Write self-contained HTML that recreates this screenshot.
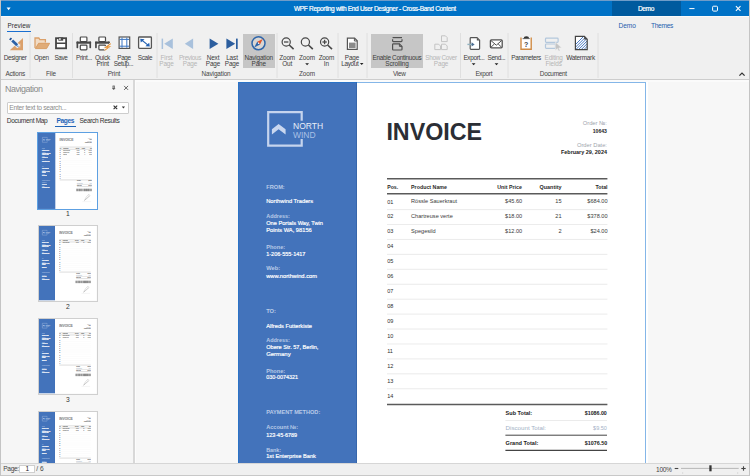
<!DOCTYPE html>
<html><head><meta charset="utf-8"><style>
html,body{margin:0;padding:0;width:750px;height:476px;overflow:hidden;background:#f0f0f0;font-family:"Liberation Sans",sans-serif;position:relative}
.tx{position:absolute;white-space:nowrap}
.abs{position:absolute}
.sv{-webkit-text-stroke:0.18px #fff}
.tt{-webkit-text-stroke:0.2px #fff}
.th .tx{-webkit-text-stroke:0.6px currentColor;opacity:.6}
.th .sv{-webkit-text-stroke:1.6px #fff;opacity:.9}
.pg{position:absolute;width:409.5px;height:522px;background:#fff;overflow:hidden}
</style></head><body>
<!-- title bar -->
<div class=abs style="left:0;top:0;width:750px;height:1px;background:#6f9cc8"></div>
<div class=abs style="left:0;top:1px;width:750px;height:15px;background:#0072c6"></div>
<div class=abs style="left:612px;top:1px;width:68.5px;height:15px;background:#005a9e"></div>
<div class=abs style="left:0;top:16px;width:750px;height:1px;background:#fafafa"></div>
<div class=abs style="left:7.4px;top:30.8px;width:23.4px;height:1.5px;background:#1a6fd0"></div>
<!-- ribbon highlights -->
<div class=abs style="left:242.7px;top:33.8px;width:32.1px;height:34px;background:#c6c6c6"></div>
<div class=abs style="left:371px;top:34px;width:52px;height:33.8px;background:#c6c6c6"></div>
<div class=abs style="left:0;top:79px;width:750px;height:1.4px;background:#cdcdcd"></div>
<!-- nav panel -->
<div class=abs style="left:1px;top:80px;width:133px;height:383px;background:#f6f6f6"></div>
<div class=abs style="left:133.4px;top:80px;width:1.8px;height:383px;background:#d8d8d8"></div>
<div class=abs style="left:6.5px;top:101.5px;width:120.2px;height:10.5px;background:#fff;border:1px solid #cdcdcd;border-radius:1px"></div>
<div class=abs style="left:55px;top:126px;width:20.8px;height:1.3px;background:#1f64b8"></div>
<!-- doc area -->
<div class=abs style="left:135.2px;top:80px;width:613.8px;height:383px;background:#f7f7f7;overflow:hidden;border-left:0.8px solid #fcfcfc">
  <div class=abs style="left:0;top:0.4px;width:614px;height:1.6px;background:#fbfbfb"></div>
  <div class=pg style="left:102px;top:2px"><div class=abs style="left:0;top:0;width:119px;height:522px;background:#4373bb;box-shadow:inset -0.8px 0 0 #3563a8"></div>
<svg class=abs width="409" height="522" viewBox="0 0 409 522" style="left:0;top:0">
<g fill="none" stroke="#c5d4ee" stroke-width="2.2">
<path d="M63.7,38.8 V30.2 H30.2 V63.7 H63.7 V56.9"/>
</g>
<path d="M33.9,52.5 L40.6,47.2 L47.6,52.5 V47.3 L40.6,41.9 L33.9,47.3 Z" fill="#c9d7ef"/>
<g stroke="#5a5a5a" stroke-width="1.5">
<line x1="149" y1="96.7" x2="369.4" y2="96.7"/>
<line x1="149" y1="111.8" x2="369.4" y2="111.8"/>
<line x1="149" y1="322.6" x2="369.4" y2="322.6"/>
</g>
<g stroke="#e6e6e6" stroke-width="0.8"><line x1="149" y1="127.60" x2="369.4" y2="127.60"/><line x1="149" y1="142.53" x2="369.4" y2="142.53"/><line x1="149" y1="157.46" x2="369.4" y2="157.46"/><line x1="149" y1="172.39" x2="369.4" y2="172.39"/><line x1="149" y1="187.32" x2="369.4" y2="187.32"/><line x1="149" y1="202.25" x2="369.4" y2="202.25"/><line x1="149" y1="217.18" x2="369.4" y2="217.18"/><line x1="149" y1="232.11" x2="369.4" y2="232.11"/><line x1="149" y1="247.04" x2="369.4" y2="247.04"/><line x1="149" y1="261.97" x2="369.4" y2="261.97"/><line x1="149" y1="276.90" x2="369.4" y2="276.90"/><line x1="149" y1="291.83" x2="369.4" y2="291.83"/><line x1="149" y1="306.76" x2="369.4" y2="306.76"/>
<line x1="267.4" y1="338.5" x2="369" y2="338.5"/></g>
<line x1="267.4" y1="353.2" x2="369" y2="353.2" stroke="#444" stroke-width="1"/>
<line x1="267.4" y1="368.4" x2="369" y2="368.4" stroke="#444" stroke-width="1.2"/>
<g fill="#333">
<rect x="262.0" y="383" width="1.5" height="17"/><rect x="265.5" y="383" width="1.5" height="17"/><rect x="268.5" y="383" width="3" height="17"/><rect x="273.5" y="383" width="1" height="17"/><rect x="276.5" y="383" width="1" height="17"/><rect x="279.0" y="383" width="2" height="17"/><rect x="283.0" y="383" width="1.5" height="17"/><rect x="285.5" y="383" width="3" height="17"/><rect x="290.5" y="383" width="3" height="17"/><rect x="295.0" y="383" width="1.5" height="17"/><rect x="297.5" y="383" width="1.5" height="17"/><rect x="301.0" y="383" width="3" height="17"/><rect x="306.0" y="383" width="1" height="17"/><rect x="309.0" y="383" width="1" height="17"/><rect x="311.0" y="383" width="1" height="17"/><rect x="313.5" y="383" width="1" height="17"/><rect x="316.0" y="383" width="3" height="17"/><rect x="321.0" y="383" width="3" height="17"/><rect x="326.0" y="383" width="3" height="17"/><rect x="330.5" y="383" width="3" height="17"/><rect x="334.5" y="383" width="2" height="17"/><rect x="337.5" y="383" width="1" height="17"/><rect x="339.5" y="383" width="3" height="17"/><rect x="343.5" y="383" width="2" height="17"/><rect x="347.5" y="383" width="3" height="17"/><rect x="352.5" y="383" width="2" height="17"/><rect x="356.0" y="383" width="3" height="17"/><rect x="361.0" y="383" width="2" height="17"/><rect x="365.0" y="383" width="3" height="17"/></g>
<path d="M318,468 C322,455 330,440 345,425 C352,418 356,425 348,436 C340,447 325,455 322,462 C330,452 345,445 360,430" fill="none" stroke="#555" stroke-width="1.2"/>
<line x1="305" y1="472" x2="365" y2="472" stroke="#aaa" stroke-width="0.8"/>
</svg>
<div class="tx" style="left:54.80px;top:40.39px;font-size:8.538px;line-height:8.538px;color:#e8eef8;">NORTH</div>
<div class="tx" style="left:54.80px;top:48.60px;font-size:8.514px;line-height:8.514px;color:#a9c0e6;">WIND</div>
<div class="tx" style="left:28.00px;top:102.53px;font-size:5.676px;line-height:5.676px;color:#b9cbe8;font-weight:700;">FROM:</div>
<div class="tx sv" style="left:28.00px;top:117.39px;font-size:5.753px;line-height:5.753px;color:#ffffff;">Northwind Traders</div>
<div class="tx" style="left:28.00px;top:132.44px;font-size:5.468px;line-height:5.468px;color:#b9cbe8;font-weight:700;">Address:</div>
<div class="tx sv" style="left:28.00px;top:139.43px;font-size:5.677px;line-height:5.677px;color:#ffffff;">One Portals Way, Twin</div>
<div class="tx sv" style="left:28.00px;top:145.80px;font-size:5.736px;line-height:5.736px;color:#ffffff;">Points WA, 98156</div>
<div class="tx" style="left:28.00px;top:162.57px;font-size:5.607px;line-height:5.607px;color:#b9cbe8;font-weight:700;">Phone:</div>
<div class="tx sv" style="left:28.00px;top:169.90px;font-size:5.536px;line-height:5.536px;color:#ffffff;">1-206-555-1417</div>
<div class="tx" style="left:28.00px;top:184.29px;font-size:5.771px;line-height:5.771px;color:#b9cbe8;font-weight:700;">Web:</div>
<div class="tx sv" style="left:28.00px;top:191.91px;font-size:5.713px;line-height:5.713px;color:#ffffff;">www.northwind.com</div>
<div class="tx" style="left:28.00px;top:226.90px;font-size:5.752px;line-height:5.752px;color:#b9cbe8;font-weight:700;">TO:</div>
<div class="tx sv" style="left:28.00px;top:241.72px;font-size:5.709px;line-height:5.709px;color:#ffffff;">Alfreds Futterkiste</div>
<div class="tx" style="left:28.00px;top:256.44px;font-size:5.468px;line-height:5.468px;color:#b9cbe8;font-weight:700;">Address:</div>
<div class="tx sv" style="left:28.00px;top:263.47px;font-size:5.601px;line-height:5.601px;color:#ffffff;">Obere Str. 57, Berlin,</div>
<div class="tx sv" style="left:28.00px;top:269.79px;font-size:5.958px;line-height:5.958px;color:#ffffff;">Germany</div>
<div class="tx" style="left:28.00px;top:286.97px;font-size:5.607px;line-height:5.607px;color:#b9cbe8;font-weight:700;">Phone:</div>
<div class="tx sv" style="left:28.00px;top:293.26px;font-size:5.429px;line-height:5.429px;color:#ffffff;">030-0074321</div>
<div class="tx" style="left:28.00px;top:327.97px;font-size:5.607px;line-height:5.607px;color:#b9cbe8;font-weight:700;">PAYMENT METHOD:</div>
<div class="tx" style="left:28.00px;top:342.98px;font-size:5.589px;line-height:5.589px;color:#b9cbe8;font-weight:700;">Account №:</div>
<div class="tx sv" style="left:28.00px;top:350.54px;font-size:5.466px;line-height:5.466px;color:#ffffff;">123-45-6789</div>
<div class="tx" style="left:28.00px;top:366.27px;font-size:5.399px;line-height:5.399px;color:#b9cbe8;font-weight:700;">Bank:</div>
<div class="tx sv" style="left:28.00px;top:372.41px;font-size:5.718px;line-height:5.718px;color:#ffffff;">1st Enterprise Bank</div>
<div class="tx" style="left:148.20px;top:38.60px;font-size:23.274px;line-height:23.274px;color:#2b2e35;font-weight:700;">INVOICE</div>
<div class="tx" style="left:344.50px;top:39.47px;font-size:5.807px;line-height:5.807px;color:#9ea4ad;">Order №:</div>
<div class="tx" style="left:354.60px;top:47.22px;font-size:5.106px;line-height:5.106px;color:#222;font-weight:700;">10643</div>
<div class="tx" style="left:338.80px;top:60.90px;font-size:5.742px;line-height:5.742px;color:#9ea4ad;">Order Date:</div>
<div class="tx" style="left:322.80px;top:67.85px;font-size:5.444px;line-height:5.444px;color:#222;font-weight:700;">February 29, 2024</div>
<div class="tx" style="left:149.00px;top:102.97px;font-size:5.209px;line-height:5.209px;color:#2a2a2a;font-weight:700;">Pos.</div>
<div class="tx" style="left:172.90px;top:102.92px;font-size:5.310px;line-height:5.310px;color:#2a2a2a;font-weight:700;">Product Name</div>
<div class="tx" style="left:259.10px;top:102.93px;font-size:5.291px;line-height:5.291px;color:#2a2a2a;font-weight:700;">Unit Price</div>
<div class="tx" style="left:301.40px;top:102.86px;font-size:5.424px;line-height:5.424px;color:#2a2a2a;font-weight:700;">Quantity</div>
<div class="tx" style="left:357.20px;top:102.94px;font-size:5.271px;line-height:5.271px;color:#2a2a2a;font-weight:700;">Total</div>
<div class="tx" style="left:149.00px;top:117.52px;font-size:5.500px;line-height:5.500px;color:#2e2e2e;">01</div>
<div class="tx" style="left:172.90px;top:117.47px;font-size:5.600px;line-height:5.600px;color:#3a3a3a;">Rössle Sauerkraut</div>
<div class="tx" style="left:266.87px;top:117.47px;font-size:5.600px;line-height:5.600px;color:#3a3a3a;">$45.60</div>
<div class="tx" style="left:317.17px;top:117.47px;font-size:5.600px;line-height:5.600px;color:#3a3a3a;">15</div>
<div class="tx" style="left:349.16px;top:117.47px;font-size:5.600px;line-height:5.600px;color:#3a3a3a;">$684.00</div>
<div class="tx" style="left:149.00px;top:132.45px;font-size:5.500px;line-height:5.500px;color:#2e2e2e;">02</div>
<div class="tx" style="left:172.90px;top:132.40px;font-size:5.600px;line-height:5.600px;color:#3a3a3a;">Chartreuse verte</div>
<div class="tx" style="left:266.87px;top:132.40px;font-size:5.600px;line-height:5.600px;color:#3a3a3a;">$18.00</div>
<div class="tx" style="left:317.17px;top:132.40px;font-size:5.600px;line-height:5.600px;color:#3a3a3a;">21</div>
<div class="tx" style="left:349.16px;top:132.40px;font-size:5.600px;line-height:5.600px;color:#3a3a3a;">$378.00</div>
<div class="tx" style="left:149.00px;top:147.38px;font-size:5.500px;line-height:5.500px;color:#2e2e2e;">03</div>
<div class="tx" style="left:172.90px;top:147.33px;font-size:5.600px;line-height:5.600px;color:#3a3a3a;">Spegesild</div>
<div class="tx" style="left:266.87px;top:147.33px;font-size:5.600px;line-height:5.600px;color:#3a3a3a;">$12.00</div>
<div class="tx" style="left:320.28px;top:147.33px;font-size:5.600px;line-height:5.600px;color:#3a3a3a;">2</div>
<div class="tx" style="left:352.27px;top:147.33px;font-size:5.600px;line-height:5.600px;color:#3a3a3a;">$24.00</div>
<div class="tx" style="left:149.00px;top:162.31px;font-size:5.500px;line-height:5.500px;color:#2e2e2e;">04</div>
<div class="tx" style="left:149.00px;top:177.24px;font-size:5.500px;line-height:5.500px;color:#2e2e2e;">05</div>
<div class="tx" style="left:149.00px;top:192.17px;font-size:5.500px;line-height:5.500px;color:#2e2e2e;">06</div>
<div class="tx" style="left:149.00px;top:207.10px;font-size:5.500px;line-height:5.500px;color:#2e2e2e;">07</div>
<div class="tx" style="left:149.00px;top:222.03px;font-size:5.500px;line-height:5.500px;color:#2e2e2e;">08</div>
<div class="tx" style="left:149.00px;top:236.96px;font-size:5.500px;line-height:5.500px;color:#2e2e2e;">09</div>
<div class="tx" style="left:149.00px;top:251.89px;font-size:5.500px;line-height:5.500px;color:#2e2e2e;">10</div>
<div class="tx" style="left:149.00px;top:266.82px;font-size:5.500px;line-height:5.500px;color:#2e2e2e;">11</div>
<div class="tx" style="left:149.00px;top:281.75px;font-size:5.500px;line-height:5.500px;color:#2e2e2e;">12</div>
<div class="tx" style="left:149.00px;top:296.68px;font-size:5.500px;line-height:5.500px;color:#2e2e2e;">13</div>
<div class="tx" style="left:149.00px;top:311.61px;font-size:5.500px;line-height:5.500px;color:#2e2e2e;">14</div>
<div class="tx" style="left:267.40px;top:328.80px;font-size:5.546px;line-height:5.546px;color:#222;font-weight:700;">Sub Total:</div>
<div class="tx" style="left:346.60px;top:328.92px;font-size:5.299px;line-height:5.299px;color:#222;font-weight:700;">$1086.00</div>
<div class="tx" style="left:267.40px;top:343.17px;font-size:6.192px;line-height:6.192px;color:#a3b1c6;">Discount Total:</div>
<div class="tx" style="left:354.90px;top:343.52px;font-size:5.514px;line-height:5.514px;color:#a3b1c6;">$9.50</div>
<div class="tx" style="left:267.40px;top:358.88px;font-size:5.588px;line-height:5.588px;color:#222;font-weight:700;">Grand Total:</div>
<div class="tx" style="left:346.60px;top:358.99px;font-size:5.370px;line-height:5.370px;color:#222;font-weight:700;">$1076.50</div><div class=abs style="left:0;top:0;width:406.3px;height:519px;border:1.6px solid rgba(20,115,210,0.52)"></div></div>
</div>
<!-- thumbnails -->
<div class="abs th" style="left:1px;top:127.5px;width:132.6px;height:335.5px;overflow:hidden">
  <div class=pg style="left:36.6px;top:5px;transform:scale(0.1455);transform-origin:0 0"><div class=abs style="left:0;top:0;width:119px;height:522px;background:#4373bb;box-shadow:inset -0.8px 0 0 #3563a8"></div>
<svg class=abs width="409" height="522" viewBox="0 0 409 522" style="left:0;top:0">
<g fill="none" stroke="#c5d4ee" stroke-width="2.2">
<path d="M63.7,38.8 V30.2 H30.2 V63.7 H63.7 V56.9"/>
</g>
<path d="M33.9,52.5 L40.6,47.2 L47.6,52.5 V47.3 L40.6,41.9 L33.9,47.3 Z" fill="#c9d7ef"/>
<g stroke="#5a5a5a" stroke-width="1.5">
<line x1="149" y1="96.7" x2="369.4" y2="96.7"/>
<line x1="149" y1="111.8" x2="369.4" y2="111.8"/>
<line x1="149" y1="322.6" x2="369.4" y2="322.6"/>
</g>
<g stroke="#e6e6e6" stroke-width="0.8"><line x1="149" y1="127.60" x2="369.4" y2="127.60"/><line x1="149" y1="142.53" x2="369.4" y2="142.53"/><line x1="149" y1="157.46" x2="369.4" y2="157.46"/><line x1="149" y1="172.39" x2="369.4" y2="172.39"/><line x1="149" y1="187.32" x2="369.4" y2="187.32"/><line x1="149" y1="202.25" x2="369.4" y2="202.25"/><line x1="149" y1="217.18" x2="369.4" y2="217.18"/><line x1="149" y1="232.11" x2="369.4" y2="232.11"/><line x1="149" y1="247.04" x2="369.4" y2="247.04"/><line x1="149" y1="261.97" x2="369.4" y2="261.97"/><line x1="149" y1="276.90" x2="369.4" y2="276.90"/><line x1="149" y1="291.83" x2="369.4" y2="291.83"/><line x1="149" y1="306.76" x2="369.4" y2="306.76"/>
<line x1="267.4" y1="338.5" x2="369" y2="338.5"/></g>
<line x1="267.4" y1="353.2" x2="369" y2="353.2" stroke="#444" stroke-width="1"/>
<line x1="267.4" y1="368.4" x2="369" y2="368.4" stroke="#444" stroke-width="1.2"/>
<g fill="#333">
<rect x="262.0" y="383" width="1.5" height="17"/><rect x="265.5" y="383" width="1.5" height="17"/><rect x="268.5" y="383" width="3" height="17"/><rect x="273.5" y="383" width="1" height="17"/><rect x="276.5" y="383" width="1" height="17"/><rect x="279.0" y="383" width="2" height="17"/><rect x="283.0" y="383" width="1.5" height="17"/><rect x="285.5" y="383" width="3" height="17"/><rect x="290.5" y="383" width="3" height="17"/><rect x="295.0" y="383" width="1.5" height="17"/><rect x="297.5" y="383" width="1.5" height="17"/><rect x="301.0" y="383" width="3" height="17"/><rect x="306.0" y="383" width="1" height="17"/><rect x="309.0" y="383" width="1" height="17"/><rect x="311.0" y="383" width="1" height="17"/><rect x="313.5" y="383" width="1" height="17"/><rect x="316.0" y="383" width="3" height="17"/><rect x="321.0" y="383" width="3" height="17"/><rect x="326.0" y="383" width="3" height="17"/><rect x="330.5" y="383" width="3" height="17"/><rect x="334.5" y="383" width="2" height="17"/><rect x="337.5" y="383" width="1" height="17"/><rect x="339.5" y="383" width="3" height="17"/><rect x="343.5" y="383" width="2" height="17"/><rect x="347.5" y="383" width="3" height="17"/><rect x="352.5" y="383" width="2" height="17"/><rect x="356.0" y="383" width="3" height="17"/><rect x="361.0" y="383" width="2" height="17"/><rect x="365.0" y="383" width="3" height="17"/></g>
<path d="M318,468 C322,455 330,440 345,425 C352,418 356,425 348,436 C340,447 325,455 322,462 C330,452 345,445 360,430" fill="none" stroke="#555" stroke-width="1.2"/>
<line x1="305" y1="472" x2="365" y2="472" stroke="#aaa" stroke-width="0.8"/>
</svg>
<div class="tx" style="left:54.80px;top:40.39px;font-size:8.538px;line-height:8.538px;color:#e8eef8;">NORTH</div>
<div class="tx" style="left:54.80px;top:48.60px;font-size:8.514px;line-height:8.514px;color:#a9c0e6;">WIND</div>
<div class="tx" style="left:28.00px;top:102.53px;font-size:5.676px;line-height:5.676px;color:#b9cbe8;font-weight:700;">FROM:</div>
<div class="tx sv" style="left:28.00px;top:117.39px;font-size:5.753px;line-height:5.753px;color:#ffffff;">Northwind Traders</div>
<div class="tx" style="left:28.00px;top:132.44px;font-size:5.468px;line-height:5.468px;color:#b9cbe8;font-weight:700;">Address:</div>
<div class="tx sv" style="left:28.00px;top:139.43px;font-size:5.677px;line-height:5.677px;color:#ffffff;">One Portals Way, Twin</div>
<div class="tx sv" style="left:28.00px;top:145.80px;font-size:5.736px;line-height:5.736px;color:#ffffff;">Points WA, 98156</div>
<div class="tx" style="left:28.00px;top:162.57px;font-size:5.607px;line-height:5.607px;color:#b9cbe8;font-weight:700;">Phone:</div>
<div class="tx sv" style="left:28.00px;top:169.90px;font-size:5.536px;line-height:5.536px;color:#ffffff;">1-206-555-1417</div>
<div class="tx" style="left:28.00px;top:184.29px;font-size:5.771px;line-height:5.771px;color:#b9cbe8;font-weight:700;">Web:</div>
<div class="tx sv" style="left:28.00px;top:191.91px;font-size:5.713px;line-height:5.713px;color:#ffffff;">www.northwind.com</div>
<div class="tx" style="left:28.00px;top:226.90px;font-size:5.752px;line-height:5.752px;color:#b9cbe8;font-weight:700;">TO:</div>
<div class="tx sv" style="left:28.00px;top:241.72px;font-size:5.709px;line-height:5.709px;color:#ffffff;">Alfreds Futterkiste</div>
<div class="tx" style="left:28.00px;top:256.44px;font-size:5.468px;line-height:5.468px;color:#b9cbe8;font-weight:700;">Address:</div>
<div class="tx sv" style="left:28.00px;top:263.47px;font-size:5.601px;line-height:5.601px;color:#ffffff;">Obere Str. 57, Berlin,</div>
<div class="tx sv" style="left:28.00px;top:269.79px;font-size:5.958px;line-height:5.958px;color:#ffffff;">Germany</div>
<div class="tx" style="left:28.00px;top:286.97px;font-size:5.607px;line-height:5.607px;color:#b9cbe8;font-weight:700;">Phone:</div>
<div class="tx sv" style="left:28.00px;top:293.26px;font-size:5.429px;line-height:5.429px;color:#ffffff;">030-0074321</div>
<div class="tx" style="left:28.00px;top:327.97px;font-size:5.607px;line-height:5.607px;color:#b9cbe8;font-weight:700;">PAYMENT METHOD:</div>
<div class="tx" style="left:28.00px;top:342.98px;font-size:5.589px;line-height:5.589px;color:#b9cbe8;font-weight:700;">Account №:</div>
<div class="tx sv" style="left:28.00px;top:350.54px;font-size:5.466px;line-height:5.466px;color:#ffffff;">123-45-6789</div>
<div class="tx" style="left:28.00px;top:366.27px;font-size:5.399px;line-height:5.399px;color:#b9cbe8;font-weight:700;">Bank:</div>
<div class="tx sv" style="left:28.00px;top:372.41px;font-size:5.718px;line-height:5.718px;color:#ffffff;">1st Enterprise Bank</div>
<div class="tx" style="left:148.20px;top:38.60px;font-size:23.274px;line-height:23.274px;color:#2b2e35;font-weight:700;">INVOICE</div>
<div class="tx" style="left:344.50px;top:39.47px;font-size:5.807px;line-height:5.807px;color:#9ea4ad;">Order №:</div>
<div class="tx" style="left:354.60px;top:47.22px;font-size:5.106px;line-height:5.106px;color:#222;font-weight:700;">10643</div>
<div class="tx" style="left:338.80px;top:60.90px;font-size:5.742px;line-height:5.742px;color:#9ea4ad;">Order Date:</div>
<div class="tx" style="left:322.80px;top:67.85px;font-size:5.444px;line-height:5.444px;color:#222;font-weight:700;">February 29, 2024</div>
<div class="tx" style="left:149.00px;top:102.97px;font-size:5.209px;line-height:5.209px;color:#2a2a2a;font-weight:700;">Pos.</div>
<div class="tx" style="left:172.90px;top:102.92px;font-size:5.310px;line-height:5.310px;color:#2a2a2a;font-weight:700;">Product Name</div>
<div class="tx" style="left:259.10px;top:102.93px;font-size:5.291px;line-height:5.291px;color:#2a2a2a;font-weight:700;">Unit Price</div>
<div class="tx" style="left:301.40px;top:102.86px;font-size:5.424px;line-height:5.424px;color:#2a2a2a;font-weight:700;">Quantity</div>
<div class="tx" style="left:357.20px;top:102.94px;font-size:5.271px;line-height:5.271px;color:#2a2a2a;font-weight:700;">Total</div>
<div class="tx" style="left:149.00px;top:117.52px;font-size:5.500px;line-height:5.500px;color:#2e2e2e;">01</div>
<div class="tx" style="left:172.90px;top:117.47px;font-size:5.600px;line-height:5.600px;color:#3a3a3a;">Rössle Sauerkraut</div>
<div class="tx" style="left:266.87px;top:117.47px;font-size:5.600px;line-height:5.600px;color:#3a3a3a;">$45.60</div>
<div class="tx" style="left:317.17px;top:117.47px;font-size:5.600px;line-height:5.600px;color:#3a3a3a;">15</div>
<div class="tx" style="left:349.16px;top:117.47px;font-size:5.600px;line-height:5.600px;color:#3a3a3a;">$684.00</div>
<div class="tx" style="left:149.00px;top:132.45px;font-size:5.500px;line-height:5.500px;color:#2e2e2e;">02</div>
<div class="tx" style="left:172.90px;top:132.40px;font-size:5.600px;line-height:5.600px;color:#3a3a3a;">Chartreuse verte</div>
<div class="tx" style="left:266.87px;top:132.40px;font-size:5.600px;line-height:5.600px;color:#3a3a3a;">$18.00</div>
<div class="tx" style="left:317.17px;top:132.40px;font-size:5.600px;line-height:5.600px;color:#3a3a3a;">21</div>
<div class="tx" style="left:349.16px;top:132.40px;font-size:5.600px;line-height:5.600px;color:#3a3a3a;">$378.00</div>
<div class="tx" style="left:149.00px;top:147.38px;font-size:5.500px;line-height:5.500px;color:#2e2e2e;">03</div>
<div class="tx" style="left:172.90px;top:147.33px;font-size:5.600px;line-height:5.600px;color:#3a3a3a;">Spegesild</div>
<div class="tx" style="left:266.87px;top:147.33px;font-size:5.600px;line-height:5.600px;color:#3a3a3a;">$12.00</div>
<div class="tx" style="left:320.28px;top:147.33px;font-size:5.600px;line-height:5.600px;color:#3a3a3a;">2</div>
<div class="tx" style="left:352.27px;top:147.33px;font-size:5.600px;line-height:5.600px;color:#3a3a3a;">$24.00</div>
<div class="tx" style="left:149.00px;top:162.31px;font-size:5.500px;line-height:5.500px;color:#2e2e2e;">04</div>
<div class="tx" style="left:149.00px;top:177.24px;font-size:5.500px;line-height:5.500px;color:#2e2e2e;">05</div>
<div class="tx" style="left:149.00px;top:192.17px;font-size:5.500px;line-height:5.500px;color:#2e2e2e;">06</div>
<div class="tx" style="left:149.00px;top:207.10px;font-size:5.500px;line-height:5.500px;color:#2e2e2e;">07</div>
<div class="tx" style="left:149.00px;top:222.03px;font-size:5.500px;line-height:5.500px;color:#2e2e2e;">08</div>
<div class="tx" style="left:149.00px;top:236.96px;font-size:5.500px;line-height:5.500px;color:#2e2e2e;">09</div>
<div class="tx" style="left:149.00px;top:251.89px;font-size:5.500px;line-height:5.500px;color:#2e2e2e;">10</div>
<div class="tx" style="left:149.00px;top:266.82px;font-size:5.500px;line-height:5.500px;color:#2e2e2e;">11</div>
<div class="tx" style="left:149.00px;top:281.75px;font-size:5.500px;line-height:5.500px;color:#2e2e2e;">12</div>
<div class="tx" style="left:149.00px;top:296.68px;font-size:5.500px;line-height:5.500px;color:#2e2e2e;">13</div>
<div class="tx" style="left:149.00px;top:311.61px;font-size:5.500px;line-height:5.500px;color:#2e2e2e;">14</div>
<div class="tx" style="left:267.40px;top:328.80px;font-size:5.546px;line-height:5.546px;color:#222;font-weight:700;">Sub Total:</div>
<div class="tx" style="left:346.60px;top:328.92px;font-size:5.299px;line-height:5.299px;color:#222;font-weight:700;">$1086.00</div>
<div class="tx" style="left:267.40px;top:343.17px;font-size:6.192px;line-height:6.192px;color:#a3b1c6;">Discount Total:</div>
<div class="tx" style="left:354.90px;top:343.52px;font-size:5.514px;line-height:5.514px;color:#a3b1c6;">$9.50</div>
<div class="tx" style="left:267.40px;top:358.88px;font-size:5.588px;line-height:5.588px;color:#222;font-weight:700;">Grand Total:</div>
<div class="tx" style="left:346.60px;top:358.99px;font-size:5.370px;line-height:5.370px;color:#222;font-weight:700;">$1076.50</div></div>
  <div class=abs style="left:35.9px;top:4.3px;width:59.6px;height:75.8px;border:0.9px solid #5da0e2"></div>
  <div class=pg style="left:37.2px;top:98.2px;transform:scale(0.1428);transform-origin:0 0"><div class=abs style="left:0;top:0;width:119px;height:522px;background:#4373bb;box-shadow:inset -0.8px 0 0 #3563a8"></div>
<svg class=abs width="409" height="522" viewBox="0 0 409 522" style="left:0;top:0">
<g fill="none" stroke="#c5d4ee" stroke-width="2.2">
<path d="M63.7,38.8 V30.2 H30.2 V63.7 H63.7 V56.9"/>
</g>
<path d="M33.9,52.5 L40.6,47.2 L47.6,52.5 V47.3 L40.6,41.9 L33.9,47.3 Z" fill="#c9d7ef"/>
<g stroke="#5a5a5a" stroke-width="1.5">
<line x1="149" y1="96.7" x2="369.4" y2="96.7"/>
<line x1="149" y1="111.8" x2="369.4" y2="111.8"/>
<line x1="149" y1="322.6" x2="369.4" y2="322.6"/>
</g>
<g stroke="#e6e6e6" stroke-width="0.8"><line x1="149" y1="127.60" x2="369.4" y2="127.60"/><line x1="149" y1="142.53" x2="369.4" y2="142.53"/><line x1="149" y1="157.46" x2="369.4" y2="157.46"/><line x1="149" y1="172.39" x2="369.4" y2="172.39"/><line x1="149" y1="187.32" x2="369.4" y2="187.32"/><line x1="149" y1="202.25" x2="369.4" y2="202.25"/><line x1="149" y1="217.18" x2="369.4" y2="217.18"/><line x1="149" y1="232.11" x2="369.4" y2="232.11"/><line x1="149" y1="247.04" x2="369.4" y2="247.04"/><line x1="149" y1="261.97" x2="369.4" y2="261.97"/><line x1="149" y1="276.90" x2="369.4" y2="276.90"/><line x1="149" y1="291.83" x2="369.4" y2="291.83"/><line x1="149" y1="306.76" x2="369.4" y2="306.76"/>
<line x1="267.4" y1="338.5" x2="369" y2="338.5"/></g>
<line x1="267.4" y1="353.2" x2="369" y2="353.2" stroke="#444" stroke-width="1"/>
<line x1="267.4" y1="368.4" x2="369" y2="368.4" stroke="#444" stroke-width="1.2"/>
<g fill="#333">
<rect x="262.0" y="383" width="1.5" height="17"/><rect x="265.5" y="383" width="1.5" height="17"/><rect x="268.5" y="383" width="3" height="17"/><rect x="273.5" y="383" width="1" height="17"/><rect x="276.5" y="383" width="1" height="17"/><rect x="279.0" y="383" width="2" height="17"/><rect x="283.0" y="383" width="1.5" height="17"/><rect x="285.5" y="383" width="3" height="17"/><rect x="290.5" y="383" width="3" height="17"/><rect x="295.0" y="383" width="1.5" height="17"/><rect x="297.5" y="383" width="1.5" height="17"/><rect x="301.0" y="383" width="3" height="17"/><rect x="306.0" y="383" width="1" height="17"/><rect x="309.0" y="383" width="1" height="17"/><rect x="311.0" y="383" width="1" height="17"/><rect x="313.5" y="383" width="1" height="17"/><rect x="316.0" y="383" width="3" height="17"/><rect x="321.0" y="383" width="3" height="17"/><rect x="326.0" y="383" width="3" height="17"/><rect x="330.5" y="383" width="3" height="17"/><rect x="334.5" y="383" width="2" height="17"/><rect x="337.5" y="383" width="1" height="17"/><rect x="339.5" y="383" width="3" height="17"/><rect x="343.5" y="383" width="2" height="17"/><rect x="347.5" y="383" width="3" height="17"/><rect x="352.5" y="383" width="2" height="17"/><rect x="356.0" y="383" width="3" height="17"/><rect x="361.0" y="383" width="2" height="17"/><rect x="365.0" y="383" width="3" height="17"/></g>
<path d="M318,468 C322,455 330,440 345,425 C352,418 356,425 348,436 C340,447 325,455 322,462 C330,452 345,445 360,430" fill="none" stroke="#555" stroke-width="1.2"/>
<line x1="305" y1="472" x2="365" y2="472" stroke="#aaa" stroke-width="0.8"/>
</svg>
<div class="tx" style="left:54.80px;top:40.39px;font-size:8.538px;line-height:8.538px;color:#e8eef8;">NORTH</div>
<div class="tx" style="left:54.80px;top:48.60px;font-size:8.514px;line-height:8.514px;color:#a9c0e6;">WIND</div>
<div class="tx" style="left:28.00px;top:102.53px;font-size:5.676px;line-height:5.676px;color:#b9cbe8;font-weight:700;">FROM:</div>
<div class="tx sv" style="left:28.00px;top:117.39px;font-size:5.753px;line-height:5.753px;color:#ffffff;">Northwind Traders</div>
<div class="tx" style="left:28.00px;top:132.44px;font-size:5.468px;line-height:5.468px;color:#b9cbe8;font-weight:700;">Address:</div>
<div class="tx sv" style="left:28.00px;top:139.43px;font-size:5.677px;line-height:5.677px;color:#ffffff;">One Portals Way, Twin</div>
<div class="tx sv" style="left:28.00px;top:145.80px;font-size:5.736px;line-height:5.736px;color:#ffffff;">Points WA, 98156</div>
<div class="tx" style="left:28.00px;top:162.57px;font-size:5.607px;line-height:5.607px;color:#b9cbe8;font-weight:700;">Phone:</div>
<div class="tx sv" style="left:28.00px;top:169.90px;font-size:5.536px;line-height:5.536px;color:#ffffff;">1-206-555-1417</div>
<div class="tx" style="left:28.00px;top:184.29px;font-size:5.771px;line-height:5.771px;color:#b9cbe8;font-weight:700;">Web:</div>
<div class="tx sv" style="left:28.00px;top:191.91px;font-size:5.713px;line-height:5.713px;color:#ffffff;">www.northwind.com</div>
<div class="tx" style="left:28.00px;top:226.90px;font-size:5.752px;line-height:5.752px;color:#b9cbe8;font-weight:700;">TO:</div>
<div class="tx sv" style="left:28.00px;top:241.72px;font-size:5.709px;line-height:5.709px;color:#ffffff;">Alfreds Futterkiste</div>
<div class="tx" style="left:28.00px;top:256.44px;font-size:5.468px;line-height:5.468px;color:#b9cbe8;font-weight:700;">Address:</div>
<div class="tx sv" style="left:28.00px;top:263.47px;font-size:5.601px;line-height:5.601px;color:#ffffff;">Obere Str. 57, Berlin,</div>
<div class="tx sv" style="left:28.00px;top:269.79px;font-size:5.958px;line-height:5.958px;color:#ffffff;">Germany</div>
<div class="tx" style="left:28.00px;top:286.97px;font-size:5.607px;line-height:5.607px;color:#b9cbe8;font-weight:700;">Phone:</div>
<div class="tx sv" style="left:28.00px;top:293.26px;font-size:5.429px;line-height:5.429px;color:#ffffff;">030-0074321</div>
<div class="tx" style="left:28.00px;top:327.97px;font-size:5.607px;line-height:5.607px;color:#b9cbe8;font-weight:700;">PAYMENT METHOD:</div>
<div class="tx" style="left:28.00px;top:342.98px;font-size:5.589px;line-height:5.589px;color:#b9cbe8;font-weight:700;">Account №:</div>
<div class="tx sv" style="left:28.00px;top:350.54px;font-size:5.466px;line-height:5.466px;color:#ffffff;">123-45-6789</div>
<div class="tx" style="left:28.00px;top:366.27px;font-size:5.399px;line-height:5.399px;color:#b9cbe8;font-weight:700;">Bank:</div>
<div class="tx sv" style="left:28.00px;top:372.41px;font-size:5.718px;line-height:5.718px;color:#ffffff;">1st Enterprise Bank</div>
<div class="tx" style="left:148.20px;top:38.60px;font-size:23.274px;line-height:23.274px;color:#2b2e35;font-weight:700;">INVOICE</div>
<div class="tx" style="left:344.50px;top:39.47px;font-size:5.807px;line-height:5.807px;color:#9ea4ad;">Order №:</div>
<div class="tx" style="left:354.60px;top:47.22px;font-size:5.106px;line-height:5.106px;color:#222;font-weight:700;">10643</div>
<div class="tx" style="left:338.80px;top:60.90px;font-size:5.742px;line-height:5.742px;color:#9ea4ad;">Order Date:</div>
<div class="tx" style="left:322.80px;top:67.85px;font-size:5.444px;line-height:5.444px;color:#222;font-weight:700;">February 29, 2024</div>
<div class="tx" style="left:149.00px;top:102.97px;font-size:5.209px;line-height:5.209px;color:#2a2a2a;font-weight:700;">Pos.</div>
<div class="tx" style="left:172.90px;top:102.92px;font-size:5.310px;line-height:5.310px;color:#2a2a2a;font-weight:700;">Product Name</div>
<div class="tx" style="left:259.10px;top:102.93px;font-size:5.291px;line-height:5.291px;color:#2a2a2a;font-weight:700;">Unit Price</div>
<div class="tx" style="left:301.40px;top:102.86px;font-size:5.424px;line-height:5.424px;color:#2a2a2a;font-weight:700;">Quantity</div>
<div class="tx" style="left:357.20px;top:102.94px;font-size:5.271px;line-height:5.271px;color:#2a2a2a;font-weight:700;">Total</div>
<div class="tx" style="left:149.00px;top:117.52px;font-size:5.500px;line-height:5.500px;color:#2e2e2e;">01</div>
<div class="tx" style="left:172.90px;top:117.47px;font-size:5.600px;line-height:5.600px;color:#3a3a3a;">Rössle Sauerkraut</div>
<div class="tx" style="left:266.87px;top:117.47px;font-size:5.600px;line-height:5.600px;color:#3a3a3a;">$45.60</div>
<div class="tx" style="left:317.17px;top:117.47px;font-size:5.600px;line-height:5.600px;color:#3a3a3a;">15</div>
<div class="tx" style="left:349.16px;top:117.47px;font-size:5.600px;line-height:5.600px;color:#3a3a3a;">$684.00</div>
<div class="tx" style="left:149.00px;top:132.45px;font-size:5.500px;line-height:5.500px;color:#2e2e2e;">02</div>
<div class="tx" style="left:149.00px;top:147.38px;font-size:5.500px;line-height:5.500px;color:#2e2e2e;">03</div>
<div class="tx" style="left:149.00px;top:162.31px;font-size:5.500px;line-height:5.500px;color:#2e2e2e;">04</div>
<div class="tx" style="left:149.00px;top:177.24px;font-size:5.500px;line-height:5.500px;color:#2e2e2e;">05</div>
<div class="tx" style="left:149.00px;top:192.17px;font-size:5.500px;line-height:5.500px;color:#2e2e2e;">06</div>
<div class="tx" style="left:149.00px;top:207.10px;font-size:5.500px;line-height:5.500px;color:#2e2e2e;">07</div>
<div class="tx" style="left:149.00px;top:222.03px;font-size:5.500px;line-height:5.500px;color:#2e2e2e;">08</div>
<div class="tx" style="left:149.00px;top:236.96px;font-size:5.500px;line-height:5.500px;color:#2e2e2e;">09</div>
<div class="tx" style="left:149.00px;top:251.89px;font-size:5.500px;line-height:5.500px;color:#2e2e2e;">10</div>
<div class="tx" style="left:149.00px;top:266.82px;font-size:5.500px;line-height:5.500px;color:#2e2e2e;">11</div>
<div class="tx" style="left:149.00px;top:281.75px;font-size:5.500px;line-height:5.500px;color:#2e2e2e;">12</div>
<div class="tx" style="left:149.00px;top:296.68px;font-size:5.500px;line-height:5.500px;color:#2e2e2e;">13</div>
<div class="tx" style="left:149.00px;top:311.61px;font-size:5.500px;line-height:5.500px;color:#2e2e2e;">14</div>
<div class="tx" style="left:267.40px;top:328.80px;font-size:5.546px;line-height:5.546px;color:#222;font-weight:700;">Sub Total:</div>
<div class="tx" style="left:346.60px;top:328.92px;font-size:5.299px;line-height:5.299px;color:#222;font-weight:700;">$1086.00</div>
<div class="tx" style="left:267.40px;top:343.17px;font-size:6.192px;line-height:6.192px;color:#a3b1c6;">Discount Total:</div>
<div class="tx" style="left:354.90px;top:343.52px;font-size:5.514px;line-height:5.514px;color:#a3b1c6;">$9.50</div>
<div class="tx" style="left:267.40px;top:358.88px;font-size:5.588px;line-height:5.588px;color:#222;font-weight:700;">Grand Total:</div>
<div class="tx" style="left:346.60px;top:358.99px;font-size:5.370px;line-height:5.370px;color:#222;font-weight:700;">$1076.50</div></div>
  <div class=abs style="left:36.7px;top:97.7px;width:58.5px;height:74.9px;border:0.6px solid #cfcfcf"></div>
  <div class=pg style="left:37.2px;top:191.2px;transform:scale(0.1428);transform-origin:0 0"><div class=abs style="left:0;top:0;width:119px;height:522px;background:#4373bb;box-shadow:inset -0.8px 0 0 #3563a8"></div>
<svg class=abs width="409" height="522" viewBox="0 0 409 522" style="left:0;top:0">
<g fill="none" stroke="#c5d4ee" stroke-width="2.2">
<path d="M63.7,38.8 V30.2 H30.2 V63.7 H63.7 V56.9"/>
</g>
<path d="M33.9,52.5 L40.6,47.2 L47.6,52.5 V47.3 L40.6,41.9 L33.9,47.3 Z" fill="#c9d7ef"/>
<g stroke="#5a5a5a" stroke-width="1.5">
<line x1="149" y1="96.7" x2="369.4" y2="96.7"/>
<line x1="149" y1="111.8" x2="369.4" y2="111.8"/>
<line x1="149" y1="322.6" x2="369.4" y2="322.6"/>
</g>
<g stroke="#e6e6e6" stroke-width="0.8"><line x1="149" y1="127.60" x2="369.4" y2="127.60"/><line x1="149" y1="142.53" x2="369.4" y2="142.53"/><line x1="149" y1="157.46" x2="369.4" y2="157.46"/><line x1="149" y1="172.39" x2="369.4" y2="172.39"/><line x1="149" y1="187.32" x2="369.4" y2="187.32"/><line x1="149" y1="202.25" x2="369.4" y2="202.25"/><line x1="149" y1="217.18" x2="369.4" y2="217.18"/><line x1="149" y1="232.11" x2="369.4" y2="232.11"/><line x1="149" y1="247.04" x2="369.4" y2="247.04"/><line x1="149" y1="261.97" x2="369.4" y2="261.97"/><line x1="149" y1="276.90" x2="369.4" y2="276.90"/><line x1="149" y1="291.83" x2="369.4" y2="291.83"/><line x1="149" y1="306.76" x2="369.4" y2="306.76"/>
<line x1="267.4" y1="338.5" x2="369" y2="338.5"/></g>
<line x1="267.4" y1="353.2" x2="369" y2="353.2" stroke="#444" stroke-width="1"/>
<line x1="267.4" y1="368.4" x2="369" y2="368.4" stroke="#444" stroke-width="1.2"/>
<g fill="#333">
<rect x="262.0" y="383" width="1.5" height="17"/><rect x="265.5" y="383" width="1.5" height="17"/><rect x="268.5" y="383" width="3" height="17"/><rect x="273.5" y="383" width="1" height="17"/><rect x="276.5" y="383" width="1" height="17"/><rect x="279.0" y="383" width="2" height="17"/><rect x="283.0" y="383" width="1.5" height="17"/><rect x="285.5" y="383" width="3" height="17"/><rect x="290.5" y="383" width="3" height="17"/><rect x="295.0" y="383" width="1.5" height="17"/><rect x="297.5" y="383" width="1.5" height="17"/><rect x="301.0" y="383" width="3" height="17"/><rect x="306.0" y="383" width="1" height="17"/><rect x="309.0" y="383" width="1" height="17"/><rect x="311.0" y="383" width="1" height="17"/><rect x="313.5" y="383" width="1" height="17"/><rect x="316.0" y="383" width="3" height="17"/><rect x="321.0" y="383" width="3" height="17"/><rect x="326.0" y="383" width="3" height="17"/><rect x="330.5" y="383" width="3" height="17"/><rect x="334.5" y="383" width="2" height="17"/><rect x="337.5" y="383" width="1" height="17"/><rect x="339.5" y="383" width="3" height="17"/><rect x="343.5" y="383" width="2" height="17"/><rect x="347.5" y="383" width="3" height="17"/><rect x="352.5" y="383" width="2" height="17"/><rect x="356.0" y="383" width="3" height="17"/><rect x="361.0" y="383" width="2" height="17"/><rect x="365.0" y="383" width="3" height="17"/></g>
<path d="M318,468 C322,455 330,440 345,425 C352,418 356,425 348,436 C340,447 325,455 322,462 C330,452 345,445 360,430" fill="none" stroke="#555" stroke-width="1.2"/>
<line x1="305" y1="472" x2="365" y2="472" stroke="#aaa" stroke-width="0.8"/>
</svg>
<div class="tx" style="left:54.80px;top:40.39px;font-size:8.538px;line-height:8.538px;color:#e8eef8;">NORTH</div>
<div class="tx" style="left:54.80px;top:48.60px;font-size:8.514px;line-height:8.514px;color:#a9c0e6;">WIND</div>
<div class="tx" style="left:28.00px;top:102.53px;font-size:5.676px;line-height:5.676px;color:#b9cbe8;font-weight:700;">FROM:</div>
<div class="tx sv" style="left:28.00px;top:117.39px;font-size:5.753px;line-height:5.753px;color:#ffffff;">Northwind Traders</div>
<div class="tx" style="left:28.00px;top:132.44px;font-size:5.468px;line-height:5.468px;color:#b9cbe8;font-weight:700;">Address:</div>
<div class="tx sv" style="left:28.00px;top:139.43px;font-size:5.677px;line-height:5.677px;color:#ffffff;">One Portals Way, Twin</div>
<div class="tx sv" style="left:28.00px;top:145.80px;font-size:5.736px;line-height:5.736px;color:#ffffff;">Points WA, 98156</div>
<div class="tx" style="left:28.00px;top:162.57px;font-size:5.607px;line-height:5.607px;color:#b9cbe8;font-weight:700;">Phone:</div>
<div class="tx sv" style="left:28.00px;top:169.90px;font-size:5.536px;line-height:5.536px;color:#ffffff;">1-206-555-1417</div>
<div class="tx" style="left:28.00px;top:184.29px;font-size:5.771px;line-height:5.771px;color:#b9cbe8;font-weight:700;">Web:</div>
<div class="tx sv" style="left:28.00px;top:191.91px;font-size:5.713px;line-height:5.713px;color:#ffffff;">www.northwind.com</div>
<div class="tx" style="left:28.00px;top:226.90px;font-size:5.752px;line-height:5.752px;color:#b9cbe8;font-weight:700;">TO:</div>
<div class="tx sv" style="left:28.00px;top:241.72px;font-size:5.709px;line-height:5.709px;color:#ffffff;">Alfreds Futterkiste</div>
<div class="tx" style="left:28.00px;top:256.44px;font-size:5.468px;line-height:5.468px;color:#b9cbe8;font-weight:700;">Address:</div>
<div class="tx sv" style="left:28.00px;top:263.47px;font-size:5.601px;line-height:5.601px;color:#ffffff;">Obere Str. 57, Berlin,</div>
<div class="tx sv" style="left:28.00px;top:269.79px;font-size:5.958px;line-height:5.958px;color:#ffffff;">Germany</div>
<div class="tx" style="left:28.00px;top:286.97px;font-size:5.607px;line-height:5.607px;color:#b9cbe8;font-weight:700;">Phone:</div>
<div class="tx sv" style="left:28.00px;top:293.26px;font-size:5.429px;line-height:5.429px;color:#ffffff;">030-0074321</div>
<div class="tx" style="left:28.00px;top:327.97px;font-size:5.607px;line-height:5.607px;color:#b9cbe8;font-weight:700;">PAYMENT METHOD:</div>
<div class="tx" style="left:28.00px;top:342.98px;font-size:5.589px;line-height:5.589px;color:#b9cbe8;font-weight:700;">Account №:</div>
<div class="tx sv" style="left:28.00px;top:350.54px;font-size:5.466px;line-height:5.466px;color:#ffffff;">123-45-6789</div>
<div class="tx" style="left:28.00px;top:366.27px;font-size:5.399px;line-height:5.399px;color:#b9cbe8;font-weight:700;">Bank:</div>
<div class="tx sv" style="left:28.00px;top:372.41px;font-size:5.718px;line-height:5.718px;color:#ffffff;">1st Enterprise Bank</div>
<div class="tx" style="left:148.20px;top:38.60px;font-size:23.274px;line-height:23.274px;color:#2b2e35;font-weight:700;">INVOICE</div>
<div class="tx" style="left:344.50px;top:39.47px;font-size:5.807px;line-height:5.807px;color:#9ea4ad;">Order №:</div>
<div class="tx" style="left:354.60px;top:47.22px;font-size:5.106px;line-height:5.106px;color:#222;font-weight:700;">10643</div>
<div class="tx" style="left:338.80px;top:60.90px;font-size:5.742px;line-height:5.742px;color:#9ea4ad;">Order Date:</div>
<div class="tx" style="left:322.80px;top:67.85px;font-size:5.444px;line-height:5.444px;color:#222;font-weight:700;">February 29, 2024</div>
<div class="tx" style="left:149.00px;top:102.97px;font-size:5.209px;line-height:5.209px;color:#2a2a2a;font-weight:700;">Pos.</div>
<div class="tx" style="left:172.90px;top:102.92px;font-size:5.310px;line-height:5.310px;color:#2a2a2a;font-weight:700;">Product Name</div>
<div class="tx" style="left:259.10px;top:102.93px;font-size:5.291px;line-height:5.291px;color:#2a2a2a;font-weight:700;">Unit Price</div>
<div class="tx" style="left:301.40px;top:102.86px;font-size:5.424px;line-height:5.424px;color:#2a2a2a;font-weight:700;">Quantity</div>
<div class="tx" style="left:357.20px;top:102.94px;font-size:5.271px;line-height:5.271px;color:#2a2a2a;font-weight:700;">Total</div>
<div class="tx" style="left:149.00px;top:117.52px;font-size:5.500px;line-height:5.500px;color:#2e2e2e;">01</div>
<div class="tx" style="left:172.90px;top:117.47px;font-size:5.600px;line-height:5.600px;color:#3a3a3a;">Rössle Sauerkraut</div>
<div class="tx" style="left:266.87px;top:117.47px;font-size:5.600px;line-height:5.600px;color:#3a3a3a;">$45.60</div>
<div class="tx" style="left:317.17px;top:117.47px;font-size:5.600px;line-height:5.600px;color:#3a3a3a;">15</div>
<div class="tx" style="left:349.16px;top:117.47px;font-size:5.600px;line-height:5.600px;color:#3a3a3a;">$684.00</div>
<div class="tx" style="left:149.00px;top:132.45px;font-size:5.500px;line-height:5.500px;color:#2e2e2e;">02</div>
<div class="tx" style="left:172.90px;top:132.40px;font-size:5.600px;line-height:5.600px;color:#3a3a3a;">Chartreuse verte</div>
<div class="tx" style="left:266.87px;top:132.40px;font-size:5.600px;line-height:5.600px;color:#3a3a3a;">$18.00</div>
<div class="tx" style="left:317.17px;top:132.40px;font-size:5.600px;line-height:5.600px;color:#3a3a3a;">21</div>
<div class="tx" style="left:349.16px;top:132.40px;font-size:5.600px;line-height:5.600px;color:#3a3a3a;">$378.00</div>
<div class="tx" style="left:149.00px;top:147.38px;font-size:5.500px;line-height:5.500px;color:#2e2e2e;">03</div>
<div class="tx" style="left:149.00px;top:162.31px;font-size:5.500px;line-height:5.500px;color:#2e2e2e;">04</div>
<div class="tx" style="left:149.00px;top:177.24px;font-size:5.500px;line-height:5.500px;color:#2e2e2e;">05</div>
<div class="tx" style="left:149.00px;top:192.17px;font-size:5.500px;line-height:5.500px;color:#2e2e2e;">06</div>
<div class="tx" style="left:149.00px;top:207.10px;font-size:5.500px;line-height:5.500px;color:#2e2e2e;">07</div>
<div class="tx" style="left:149.00px;top:222.03px;font-size:5.500px;line-height:5.500px;color:#2e2e2e;">08</div>
<div class="tx" style="left:149.00px;top:236.96px;font-size:5.500px;line-height:5.500px;color:#2e2e2e;">09</div>
<div class="tx" style="left:149.00px;top:251.89px;font-size:5.500px;line-height:5.500px;color:#2e2e2e;">10</div>
<div class="tx" style="left:149.00px;top:266.82px;font-size:5.500px;line-height:5.500px;color:#2e2e2e;">11</div>
<div class="tx" style="left:149.00px;top:281.75px;font-size:5.500px;line-height:5.500px;color:#2e2e2e;">12</div>
<div class="tx" style="left:149.00px;top:296.68px;font-size:5.500px;line-height:5.500px;color:#2e2e2e;">13</div>
<div class="tx" style="left:149.00px;top:311.61px;font-size:5.500px;line-height:5.500px;color:#2e2e2e;">14</div>
<div class="tx" style="left:267.40px;top:328.80px;font-size:5.546px;line-height:5.546px;color:#222;font-weight:700;">Sub Total:</div>
<div class="tx" style="left:346.60px;top:328.92px;font-size:5.299px;line-height:5.299px;color:#222;font-weight:700;">$1086.00</div>
<div class="tx" style="left:267.40px;top:343.17px;font-size:6.192px;line-height:6.192px;color:#a3b1c6;">Discount Total:</div>
<div class="tx" style="left:354.90px;top:343.52px;font-size:5.514px;line-height:5.514px;color:#a3b1c6;">$9.50</div>
<div class="tx" style="left:267.40px;top:358.88px;font-size:5.588px;line-height:5.588px;color:#222;font-weight:700;">Grand Total:</div>
<div class="tx" style="left:346.60px;top:358.99px;font-size:5.370px;line-height:5.370px;color:#222;font-weight:700;">$1076.50</div></div>
  <div class=abs style="left:36.7px;top:190.7px;width:58.5px;height:74.9px;border:0.6px solid #cfcfcf"></div>
  <div class=pg style="left:37.2px;top:284.2px;transform:scale(0.1428);transform-origin:0 0"><div class=abs style="left:0;top:0;width:119px;height:522px;background:#4373bb;box-shadow:inset -0.8px 0 0 #3563a8"></div>
<svg class=abs width="409" height="522" viewBox="0 0 409 522" style="left:0;top:0">
<g fill="none" stroke="#c5d4ee" stroke-width="2.2">
<path d="M63.7,38.8 V30.2 H30.2 V63.7 H63.7 V56.9"/>
</g>
<path d="M33.9,52.5 L40.6,47.2 L47.6,52.5 V47.3 L40.6,41.9 L33.9,47.3 Z" fill="#c9d7ef"/>
<g stroke="#5a5a5a" stroke-width="1.5">
<line x1="149" y1="96.7" x2="369.4" y2="96.7"/>
<line x1="149" y1="111.8" x2="369.4" y2="111.8"/>
<line x1="149" y1="322.6" x2="369.4" y2="322.6"/>
</g>
<g stroke="#e6e6e6" stroke-width="0.8"><line x1="149" y1="127.60" x2="369.4" y2="127.60"/><line x1="149" y1="142.53" x2="369.4" y2="142.53"/><line x1="149" y1="157.46" x2="369.4" y2="157.46"/><line x1="149" y1="172.39" x2="369.4" y2="172.39"/><line x1="149" y1="187.32" x2="369.4" y2="187.32"/><line x1="149" y1="202.25" x2="369.4" y2="202.25"/><line x1="149" y1="217.18" x2="369.4" y2="217.18"/><line x1="149" y1="232.11" x2="369.4" y2="232.11"/><line x1="149" y1="247.04" x2="369.4" y2="247.04"/><line x1="149" y1="261.97" x2="369.4" y2="261.97"/><line x1="149" y1="276.90" x2="369.4" y2="276.90"/><line x1="149" y1="291.83" x2="369.4" y2="291.83"/><line x1="149" y1="306.76" x2="369.4" y2="306.76"/>
<line x1="267.4" y1="338.5" x2="369" y2="338.5"/></g>
<line x1="267.4" y1="353.2" x2="369" y2="353.2" stroke="#444" stroke-width="1"/>
<line x1="267.4" y1="368.4" x2="369" y2="368.4" stroke="#444" stroke-width="1.2"/>
<g fill="#333">
<rect x="262.0" y="383" width="1.5" height="17"/><rect x="265.5" y="383" width="1.5" height="17"/><rect x="268.5" y="383" width="3" height="17"/><rect x="273.5" y="383" width="1" height="17"/><rect x="276.5" y="383" width="1" height="17"/><rect x="279.0" y="383" width="2" height="17"/><rect x="283.0" y="383" width="1.5" height="17"/><rect x="285.5" y="383" width="3" height="17"/><rect x="290.5" y="383" width="3" height="17"/><rect x="295.0" y="383" width="1.5" height="17"/><rect x="297.5" y="383" width="1.5" height="17"/><rect x="301.0" y="383" width="3" height="17"/><rect x="306.0" y="383" width="1" height="17"/><rect x="309.0" y="383" width="1" height="17"/><rect x="311.0" y="383" width="1" height="17"/><rect x="313.5" y="383" width="1" height="17"/><rect x="316.0" y="383" width="3" height="17"/><rect x="321.0" y="383" width="3" height="17"/><rect x="326.0" y="383" width="3" height="17"/><rect x="330.5" y="383" width="3" height="17"/><rect x="334.5" y="383" width="2" height="17"/><rect x="337.5" y="383" width="1" height="17"/><rect x="339.5" y="383" width="3" height="17"/><rect x="343.5" y="383" width="2" height="17"/><rect x="347.5" y="383" width="3" height="17"/><rect x="352.5" y="383" width="2" height="17"/><rect x="356.0" y="383" width="3" height="17"/><rect x="361.0" y="383" width="2" height="17"/><rect x="365.0" y="383" width="3" height="17"/></g>
<path d="M318,468 C322,455 330,440 345,425 C352,418 356,425 348,436 C340,447 325,455 322,462 C330,452 345,445 360,430" fill="none" stroke="#555" stroke-width="1.2"/>
<line x1="305" y1="472" x2="365" y2="472" stroke="#aaa" stroke-width="0.8"/>
</svg>
<div class="tx" style="left:54.80px;top:40.39px;font-size:8.538px;line-height:8.538px;color:#e8eef8;">NORTH</div>
<div class="tx" style="left:54.80px;top:48.60px;font-size:8.514px;line-height:8.514px;color:#a9c0e6;">WIND</div>
<div class="tx" style="left:28.00px;top:102.53px;font-size:5.676px;line-height:5.676px;color:#b9cbe8;font-weight:700;">FROM:</div>
<div class="tx sv" style="left:28.00px;top:117.39px;font-size:5.753px;line-height:5.753px;color:#ffffff;">Northwind Traders</div>
<div class="tx" style="left:28.00px;top:132.44px;font-size:5.468px;line-height:5.468px;color:#b9cbe8;font-weight:700;">Address:</div>
<div class="tx sv" style="left:28.00px;top:139.43px;font-size:5.677px;line-height:5.677px;color:#ffffff;">One Portals Way, Twin</div>
<div class="tx sv" style="left:28.00px;top:145.80px;font-size:5.736px;line-height:5.736px;color:#ffffff;">Points WA, 98156</div>
<div class="tx" style="left:28.00px;top:162.57px;font-size:5.607px;line-height:5.607px;color:#b9cbe8;font-weight:700;">Phone:</div>
<div class="tx sv" style="left:28.00px;top:169.90px;font-size:5.536px;line-height:5.536px;color:#ffffff;">1-206-555-1417</div>
<div class="tx" style="left:28.00px;top:184.29px;font-size:5.771px;line-height:5.771px;color:#b9cbe8;font-weight:700;">Web:</div>
<div class="tx sv" style="left:28.00px;top:191.91px;font-size:5.713px;line-height:5.713px;color:#ffffff;">www.northwind.com</div>
<div class="tx" style="left:28.00px;top:226.90px;font-size:5.752px;line-height:5.752px;color:#b9cbe8;font-weight:700;">TO:</div>
<div class="tx sv" style="left:28.00px;top:241.72px;font-size:5.709px;line-height:5.709px;color:#ffffff;">Alfreds Futterkiste</div>
<div class="tx" style="left:28.00px;top:256.44px;font-size:5.468px;line-height:5.468px;color:#b9cbe8;font-weight:700;">Address:</div>
<div class="tx sv" style="left:28.00px;top:263.47px;font-size:5.601px;line-height:5.601px;color:#ffffff;">Obere Str. 57, Berlin,</div>
<div class="tx sv" style="left:28.00px;top:269.79px;font-size:5.958px;line-height:5.958px;color:#ffffff;">Germany</div>
<div class="tx" style="left:28.00px;top:286.97px;font-size:5.607px;line-height:5.607px;color:#b9cbe8;font-weight:700;">Phone:</div>
<div class="tx sv" style="left:28.00px;top:293.26px;font-size:5.429px;line-height:5.429px;color:#ffffff;">030-0074321</div>
<div class="tx" style="left:28.00px;top:327.97px;font-size:5.607px;line-height:5.607px;color:#b9cbe8;font-weight:700;">PAYMENT METHOD:</div>
<div class="tx" style="left:28.00px;top:342.98px;font-size:5.589px;line-height:5.589px;color:#b9cbe8;font-weight:700;">Account №:</div>
<div class="tx sv" style="left:28.00px;top:350.54px;font-size:5.466px;line-height:5.466px;color:#ffffff;">123-45-6789</div>
<div class="tx" style="left:28.00px;top:366.27px;font-size:5.399px;line-height:5.399px;color:#b9cbe8;font-weight:700;">Bank:</div>
<div class="tx sv" style="left:28.00px;top:372.41px;font-size:5.718px;line-height:5.718px;color:#ffffff;">1st Enterprise Bank</div>
<div class="tx" style="left:148.20px;top:38.60px;font-size:23.274px;line-height:23.274px;color:#2b2e35;font-weight:700;">INVOICE</div>
<div class="tx" style="left:344.50px;top:39.47px;font-size:5.807px;line-height:5.807px;color:#9ea4ad;">Order №:</div>
<div class="tx" style="left:354.60px;top:47.22px;font-size:5.106px;line-height:5.106px;color:#222;font-weight:700;">10643</div>
<div class="tx" style="left:338.80px;top:60.90px;font-size:5.742px;line-height:5.742px;color:#9ea4ad;">Order Date:</div>
<div class="tx" style="left:322.80px;top:67.85px;font-size:5.444px;line-height:5.444px;color:#222;font-weight:700;">February 29, 2024</div>
<div class="tx" style="left:149.00px;top:102.97px;font-size:5.209px;line-height:5.209px;color:#2a2a2a;font-weight:700;">Pos.</div>
<div class="tx" style="left:172.90px;top:102.92px;font-size:5.310px;line-height:5.310px;color:#2a2a2a;font-weight:700;">Product Name</div>
<div class="tx" style="left:259.10px;top:102.93px;font-size:5.291px;line-height:5.291px;color:#2a2a2a;font-weight:700;">Unit Price</div>
<div class="tx" style="left:301.40px;top:102.86px;font-size:5.424px;line-height:5.424px;color:#2a2a2a;font-weight:700;">Quantity</div>
<div class="tx" style="left:357.20px;top:102.94px;font-size:5.271px;line-height:5.271px;color:#2a2a2a;font-weight:700;">Total</div>
<div class="tx" style="left:149.00px;top:117.52px;font-size:5.500px;line-height:5.500px;color:#2e2e2e;">01</div>
<div class="tx" style="left:172.90px;top:117.47px;font-size:5.600px;line-height:5.600px;color:#3a3a3a;">Rössle Sauerkraut</div>
<div class="tx" style="left:266.87px;top:117.47px;font-size:5.600px;line-height:5.600px;color:#3a3a3a;">$45.60</div>
<div class="tx" style="left:317.17px;top:117.47px;font-size:5.600px;line-height:5.600px;color:#3a3a3a;">15</div>
<div class="tx" style="left:349.16px;top:117.47px;font-size:5.600px;line-height:5.600px;color:#3a3a3a;">$684.00</div>
<div class="tx" style="left:149.00px;top:132.45px;font-size:5.500px;line-height:5.500px;color:#2e2e2e;">02</div>
<div class="tx" style="left:172.90px;top:132.40px;font-size:5.600px;line-height:5.600px;color:#3a3a3a;">Chartreuse verte</div>
<div class="tx" style="left:266.87px;top:132.40px;font-size:5.600px;line-height:5.600px;color:#3a3a3a;">$18.00</div>
<div class="tx" style="left:317.17px;top:132.40px;font-size:5.600px;line-height:5.600px;color:#3a3a3a;">21</div>
<div class="tx" style="left:349.16px;top:132.40px;font-size:5.600px;line-height:5.600px;color:#3a3a3a;">$378.00</div>
<div class="tx" style="left:149.00px;top:147.38px;font-size:5.500px;line-height:5.500px;color:#2e2e2e;">03</div>
<div class="tx" style="left:149.00px;top:162.31px;font-size:5.500px;line-height:5.500px;color:#2e2e2e;">04</div>
<div class="tx" style="left:149.00px;top:177.24px;font-size:5.500px;line-height:5.500px;color:#2e2e2e;">05</div>
<div class="tx" style="left:149.00px;top:192.17px;font-size:5.500px;line-height:5.500px;color:#2e2e2e;">06</div>
<div class="tx" style="left:149.00px;top:207.10px;font-size:5.500px;line-height:5.500px;color:#2e2e2e;">07</div>
<div class="tx" style="left:149.00px;top:222.03px;font-size:5.500px;line-height:5.500px;color:#2e2e2e;">08</div>
<div class="tx" style="left:149.00px;top:236.96px;font-size:5.500px;line-height:5.500px;color:#2e2e2e;">09</div>
<div class="tx" style="left:149.00px;top:251.89px;font-size:5.500px;line-height:5.500px;color:#2e2e2e;">10</div>
<div class="tx" style="left:149.00px;top:266.82px;font-size:5.500px;line-height:5.500px;color:#2e2e2e;">11</div>
<div class="tx" style="left:149.00px;top:281.75px;font-size:5.500px;line-height:5.500px;color:#2e2e2e;">12</div>
<div class="tx" style="left:149.00px;top:296.68px;font-size:5.500px;line-height:5.500px;color:#2e2e2e;">13</div>
<div class="tx" style="left:149.00px;top:311.61px;font-size:5.500px;line-height:5.500px;color:#2e2e2e;">14</div>
<div class="tx" style="left:267.40px;top:328.80px;font-size:5.546px;line-height:5.546px;color:#222;font-weight:700;">Sub Total:</div>
<div class="tx" style="left:346.60px;top:328.92px;font-size:5.299px;line-height:5.299px;color:#222;font-weight:700;">$1086.00</div>
<div class="tx" style="left:267.40px;top:343.17px;font-size:6.192px;line-height:6.192px;color:#a3b1c6;">Discount Total:</div>
<div class="tx" style="left:354.90px;top:343.52px;font-size:5.514px;line-height:5.514px;color:#a3b1c6;">$9.50</div>
<div class="tx" style="left:267.40px;top:358.88px;font-size:5.588px;line-height:5.588px;color:#222;font-weight:700;">Grand Total:</div>
<div class="tx" style="left:346.60px;top:358.99px;font-size:5.370px;line-height:5.370px;color:#222;font-weight:700;">$1076.50</div></div>
  <div class=abs style="left:36.7px;top:283.7px;width:58.5px;height:74.9px;border:0.6px solid #cfcfcf"></div>
</div>
<!-- status bar -->
<div class=abs style="left:0;top:463px;width:750px;height:1px;background:#d6d6d6"></div>
<div class=abs style="left:0;top:464px;width:750px;height:11px;background:#f0f0f0"></div>
<div class=abs style="left:19.2px;top:465.2px;width:13.5px;height:6.3px;background:#fff;border:1px solid #cfcfcf"></div>
<div class=abs style="left:0;top:475px;width:750px;height:1px;background:#c8c8c8"></div>
<!-- window borders -->
<div class=abs style="left:0;top:0;width:1px;height:476px;background:#c4c4c4"></div>
<div class=abs style="left:749px;top:0;width:1px;height:476px;background:#c4c4c4"></div>
<!-- icons overlay -->
<svg class=abs width="750" height="476" viewBox="0 0 750 476" style="left:0;top:0">
<!-- title bar -->
<path d="M6.6,7.6 L10.6,7.6 L8.6,10.2 Z" fill="#fff"/>
<g stroke="#fff" stroke-width="1" fill="none">
<line x1="689.3" y1="8.6" x2="694.5" y2="8.6"/>
<rect x="712.6" y="6.2" width="4.9" height="4.9" rx="1"/>
<path d="M735.9,6.2 L740.5,10.8 M740.5,6.2 L735.9,10.8" stroke-width="1.1"/>
</g>
<!-- separators -->
<g stroke="#dadada" stroke-width="0.8">
<line x1="30" y1="33" x2="30" y2="78"/><line x1="72.5" y1="33" x2="72.5" y2="78"/>
<line x1="157" y1="33" x2="157" y2="78"/><line x1="277" y1="33" x2="277" y2="78"/>
<line x1="338" y1="33" x2="338" y2="78"/><line x1="367" y1="33" x2="367" y2="78"/>
<line x1="460.5" y1="33" x2="460.5" y2="78"/><line x1="508" y1="33" x2="508" y2="78"/>
<line x1="598" y1="33" x2="598" y2="78"/>
</g>
<!-- designer -->
<path d="M9.8,50.2 L23,50.2 L23,38 Z" fill="#dba06a"/>
<path d="M15.5,47.5 L20.5,47.5 L20.5,43 Z" fill="#f0f0f0" opacity="0.35"/>
<line x1="9.6" y1="38" x2="18.8" y2="46.8" stroke="#f4f4f4" stroke-width="4.2"/>
<line x1="12.2" y1="40.5" x2="17.2" y2="45.3" stroke="#2d62a6" stroke-width="2.8"/>
<line x1="10" y1="38.4" x2="11.2" y2="39.6" stroke="#1f4f95" stroke-width="2.6"/>
<path d="M16.6,46.4 L18.8,47.2 L18,45 Z" fill="#6a9ad4"/>
<!-- open -->
<path d="M35,48 V38 H38.8 L39.8,39.6 H45.4 V42.6" fill="#f1dcc6" stroke="#dba06a" stroke-width="1.3"/>
<path d="M35.4,48.6 L38.6,43.3 H49.6 L46.6,48.6 Z" fill="#e0ac78" stroke="#d79a5d" stroke-width="0.9"/>
<!-- save -->
<rect x="56" y="38.2" width="10.1" height="10.1" fill="#fff" stroke="#454545" stroke-width="1.8"/>
<rect x="56" y="42.5" width="10.1" height="1.5" fill="#454545"/>
<rect x="58.4" y="37.4" width="4.8" height="3.3" fill="#454545"/>
<rect x="59.1" y="38.3" width="1.6" height="1.5" fill="#fff"/>
<!-- print -->
<g transform="translate(0,0)">
<rect x="76.5" y="41.4" width="14.6" height="6.8" rx="0.8" fill="#f4f4f4"/>
<rect x="76.5" y="41.4" width="14.6" height="2.3" rx="0.6" fill="#484848"/>
<rect x="76.5" y="41.4" width="1.7" height="6.8" rx="0.6" fill="#484848"/>
<rect x="89.4" y="41.4" width="1.7" height="6.8" rx="0.6" fill="#484848"/>
<rect x="80.3" y="37" width="6.6" height="4.6" rx="0.8" fill="#fff" stroke="#484848" stroke-width="1.2"/>
<rect x="80.3" y="45.2" width="6.6" height="4.6" rx="0.8" fill="#fff" stroke="#484848" stroke-width="1.2"/>
</g>
<g transform="translate(18.6,0)">
<rect x="76.5" y="41.4" width="14.6" height="6.8" rx="0.8" fill="#f4f4f4"/>
<rect x="76.5" y="41.4" width="14.6" height="2.3" rx="0.6" fill="#484848"/>
<rect x="76.5" y="41.4" width="1.7" height="6.8" rx="0.6" fill="#484848"/>
<rect x="89.4" y="41.4" width="1.7" height="6.8" rx="0.6" fill="#484848"/>
<rect x="80.3" y="37" width="6.6" height="4.6" rx="0.8" fill="#fff" stroke="#484848" stroke-width="1.2"/>
<rect x="80.3" y="45.2" width="6.6" height="4.6" rx="0.8" fill="#fff" stroke="#484848" stroke-width="1.2"/>
</g>
<path d="M110.8,43.6 L105.8,47.3 L109.4,46.9 L104.6,50.4" fill="none" stroke="#f2f2f2" stroke-width="2.2"/><path d="M110.8,43.6 L105.8,47.3 L109.4,46.9 L104.6,50.4" fill="none" stroke="#e8902f" stroke-width="1.1"/>
<!-- page setup -->
<rect x="119.1" y="37" width="10.6" height="11.4" fill="#fff" stroke="#555" stroke-width="1.2"/>
<g stroke="#3d77c4" stroke-width="1"><line x1="122" y1="37.6" x2="122" y2="47.8"/><line x1="126.8" y1="37.6" x2="126.8" y2="47.8"/><line x1="119.6" y1="39.4" x2="129.2" y2="39.4"/><line x1="119.6" y1="46.2" x2="129.2" y2="46.2"/></g>
<!-- scale -->
<rect x="138.6" y="37" width="12.8" height="11.4" rx="0.8" fill="#fff" stroke="#555" stroke-width="1.3"/>
<line x1="141.4" y1="39.8" x2="148.6" y2="45.6" stroke="#2462b3" stroke-width="1.1"/>
<path d="M140.2,38.8 L144.6,39.2 L140.8,42.6 Z M149.8,46.6 L145.4,46.2 L149.2,42.8 Z" fill="#2462b3"/>
<!-- nav arrows -->
<rect x="161.6" y="38.6" width="1.5" height="10.4" fill="#a9c1dc"/>
<path d="M172.8,38.6 L164.2,43.8 L172.8,49 Z" fill="#a9c1dc"/>
<path d="M193.1,38.6 L184.8,43.8 L193.1,49 Z" fill="#a9c1dc"/>
<path d="M209.6,38.6 L218.4,43.8 L209.6,49 Z" fill="#2c5e9e"/>
<path d="M226.4,38.6 L235.2,43.8 L226.4,49 Z" fill="#2c5e9e"/>
<rect x="236" y="38.6" width="1.7" height="10.4" fill="#2c5e9e"/>
<!-- compass -->
<circle cx="258.5" cy="43.3" r="6.5" fill="#d9d6d3" stroke="#2f66aa" stroke-width="1.5"/>
<path d="M262.8,39 L260,44.6 L257.2,41.8 Z" fill="#e0552b"/>
<path d="M254.2,47.6 L257.2,41.8 L260,44.6 Z" fill="#2f66aa"/>
<circle cx="258.6" cy="43.2" r="0.7" fill="#fff"/>
<!-- zoom -->
<g fill="none" stroke="#484848">
<circle cx="286.2" cy="42" r="4.1" stroke-width="1.2"/><line x1="289.2" y1="45" x2="293.6" y2="49.2" stroke-width="1.6"/><line x1="284" y1="42" x2="288.4" y2="42" stroke-width="1.3"/>
<circle cx="305.4" cy="42" r="4.1" stroke-width="1.2"/><line x1="308.4" y1="45" x2="312.8" y2="49.2" stroke-width="1.6"/>
<circle cx="324.6" cy="42" r="4.1" stroke-width="1.2"/><line x1="327.6" y1="45" x2="332" y2="49.2" stroke-width="1.6"/><line x1="322.4" y1="42" x2="326.8" y2="42" stroke-width="1.3"/><line x1="324.6" y1="39.8" x2="324.6" y2="44.2" stroke-width="1.3"/>
</g>
<!-- page layout -->
<path d="M347.4,38.2 H354.6 L357.2,40.8 V49.4 H347.4 Z" fill="#fff" stroke="#555" stroke-width="1.2"/>
<rect x="349" y="42.6" width="6.6" height="5.4" fill="#8a8a8a"/>
<path d="M354.4,38.2 V41 H357.2" fill="none" stroke="#555" stroke-width="1"/>
<!-- continuous scrolling -->
<g fill="none" stroke="#505050" stroke-width="1.2">
<path d="M392.6,37.6 H402"/><path d="M392.6,39.2 V40.8 Q392.6,41.6 393.4,41.6 H401.2 Q402,41.6 402,40.8 V39.2"/>
<path d="M393.4,50 Q392.6,50 392.6,49.2 V44.6 Q392.6,43.8 393.4,43.8 H399.4 L402,46.4 V49.2 Q402,50 401.2,50 Z"/><path d="M399.4,43.8 V46.4 H402" stroke-width="1"/>
</g>
<!-- show cover -->
<g fill="none" stroke="#c4c4c4" stroke-width="1">
<path d="M441.5,35.8 H445.4 L447.2,37.6 V41.6 H441.5 Z"/>
<path d="M434.8,44.2 H438.7 L440.5,46 V49.6 H434.8 Z"/>
<path d="M441.5,44.2 H445.4 L447.2,46 V49.6 H441.5 Z"/>
</g>
<!-- export -->
<path d="M471,37.6 H477 L479.6,40.2 V48.6 Q479.6,49.4 478.8,49.4 H471 Q470.2,49.4 470.2,48.6 V38.4 Q470.2,37.6 471,37.6 Z" fill="#fff" stroke="#555" stroke-width="1.2"/>
<path d="M476.8,37.8 L479.4,40.4 L476.8,40.4 Z" fill="#555"/>
<line x1="467.4" y1="44.4" x2="472.2" y2="44.4" stroke="#93b3c0" stroke-width="1.4"/>
<path d="M471.6,42.3 L474.6,44.4 L471.6,46.5 Z" fill="#4a6d92"/>
<!-- send -->
<rect x="490.4" y="39.8" width="11.8" height="8" rx="1" fill="#fff" stroke="#505050" stroke-width="1.3"/>
<path d="M491,40.6 L496.3,45.2 L501.6,40.6 M491,47.2 L494.4,44 M501.6,47.2 L498.2,44" fill="none" stroke="#505050" stroke-width="1"/>
<!-- parameters -->
<path d="M521,37.6 V49.2 H531.2 V37.6" fill="#fff" stroke="#d08b45" stroke-width="1.4"/>
<path d="M523.8,38.6 A2.6,2.4 0 0 1 529,38.6 Z" fill="#333"/><rect x="522.6" y="38.2" width="7.2" height="0.9" fill="#555"/>
<text x="526.1" y="47.4" font-family="Liberation Sans" font-weight="700" font-size="7" fill="#444" text-anchor="middle">?</text>
<!-- editing fields -->
<g fill="none" stroke="#b3c7dc" stroke-width="1.2">
<rect x="545.5" y="38.2" width="12.6" height="4.2" rx="0.8"/><rect x="545.5" y="44" width="10" height="4.4" rx="0.8"/>
</g>
<path d="M555.4,42 V50.4 L557.4,48.6 L558.8,51.2 L560,50.6 L558.8,48 L561.6,47.8 Z" fill="#c4c4c4" stroke="#f0f0f0" stroke-width="0.5"/>
<!-- watermark -->
<defs><clipPath id="wmc"><path d="M575.4,36.4 H584.4 L587.2,39.2 V49.6 H575.4 Z"/></clipPath></defs>
<path d="M575.4,36.4 H584.4 L587.2,39.2 V49.6 H575.4 Z" fill="#fff"/>
<g clip-path="url(#wmc)" stroke="#3d72c0" stroke-width="0.95"><line x1="568.0" y1="52" x2="585.0" y2="35"/><line x1="570.7" y1="52" x2="587.7" y2="35"/><line x1="573.4" y1="52" x2="590.4" y2="35"/><line x1="576.1" y1="52" x2="593.1" y2="35"/><line x1="578.8" y1="52" x2="595.8" y2="35"/><line x1="581.5" y1="52" x2="598.5" y2="35"/><line x1="584.2" y1="52" x2="601.2" y2="35"/><line x1="586.9" y1="52" x2="603.9" y2="35"/><line x1="589.6" y1="52" x2="606.6" y2="35"/></g>
<path d="M575.4,36.4 H584.4 L587.2,39.2 V49.6 H575.4 Z" fill="none" stroke="#444" stroke-width="1.2"/>
<path d="M584.2,36.4 V39.4 H587.2 Z" fill="#444"/>
<!-- dropdown arrows -->
<g fill="#222">
<path d="M305.2,63.2 H309 L307.1,65.3 Z"/>
<path d="M471.7,63.2 H475.5 L473.6,65.3 Z"/>
<path d="M494.6,63.2 H498.4 L496.5,65.3 Z"/>
<path d="M359.9,63 H363.5 L361.7,65 Z"/>
</g>
<path d="M739.4,75.6 L742,73.1 L744.6,75.6" fill="none" stroke="#333" stroke-width="1.3"/>
<!-- nav panel icons -->
<path d="M112.6,86 H114.8 M113,86.2 V88.4 H114.4 V86.2 M112.2,88.6 H115.2 M113.7,88.6 V90" fill="none" stroke="#555" stroke-width="0.8"/>
<path d="M124.1,85.9 L128.1,89.9 M128.1,85.9 L124.1,89.9" stroke="#555" stroke-width="0.9"/>
<path d="M113.6,105.6 L117.2,109.2 M117.2,105.6 L113.6,109.2" stroke="#333" stroke-width="1.1"/>
<path d="M121.8,106.6 H125 L123.4,108.4 Z" fill="#333"/>
<!-- status -->
<g stroke="#444">
<line x1="674.7" y1="468.5" x2="678.3" y2="468.5" stroke-width="1.1"/>
<line x1="741.3" y1="468.5" x2="745.7" y2="468.5" stroke-width="1.1"/><line x1="743.5" y1="466.3" x2="743.5" y2="470.7" stroke-width="1.1"/>
</g>
<line x1="681" y1="468.4" x2="738.7" y2="468.4" stroke="#a8a8a8" stroke-width="0.8"/>
<rect x="709.3" y="465.3" width="2.3" height="6" fill="#333"/>
<g fill="#999"><rect x="682.5" y="472.6" width="0.6" height="0.8"/><rect x="737.5" y="472.6" width="0.6" height="0.8"/></g>
</svg>
<div class="tx tt" style="left:293.90px;top:5.77px;font-size:6.586px;line-height:6.586px;color:#fff;letter-spacing:-0.341px;">WPF Reporting with End User Designer - Cross-Band Content</div>
<div class="tx tt" style="left:637.90px;top:6.17px;font-size:6.600px;line-height:6.600px;color:#fff;letter-spacing:-0.350px;">Demo</div>
<div class="tx" style="left:7.60px;top:22.52px;font-size:6.300px;line-height:6.300px;color:#2b2b2b;letter-spacing:0.056px;">Preview</div>
<div class="tx" style="left:618.40px;top:22.57px;font-size:6.600px;line-height:6.600px;color:#1f5fae;">Demo</div>
<div class="tx" style="left:651.00px;top:22.57px;font-size:6.600px;line-height:6.600px;color:#1f5fae;letter-spacing:-0.307px;">Themes</div>
<div class="tx" style="left:3.70px;top:54.57px;font-size:6.400px;line-height:6.400px;color:#3b3b3b;letter-spacing:-0.327px;">Designer</div>
<div class="tx" style="left:34.00px;top:54.57px;font-size:6.400px;line-height:6.400px;color:#3b3b3b;letter-spacing:-0.164px;">Open</div>
<div class="tx" style="left:54.41px;top:54.57px;font-size:6.400px;line-height:6.400px;color:#3b3b3b;letter-spacing:-0.350px;">Save</div>
<div class="tx" style="left:76.00px;top:54.57px;font-size:6.400px;line-height:6.400px;color:#3b3b3b;letter-spacing:-0.312px;">Print...</div>
<div class="tx" style="left:95.00px;top:54.57px;font-size:6.400px;line-height:6.400px;color:#3b3b3b;letter-spacing:-0.272px;">Quick</div>
<div class="tx" style="left:96.47px;top:61.27px;font-size:6.400px;line-height:6.400px;color:#3b3b3b;letter-spacing:-0.120px;">Print</div>
<div class="tx" style="left:117.23px;top:54.57px;font-size:6.400px;line-height:6.400px;color:#3b3b3b;letter-spacing:-0.350px;">Page</div>
<div class="tx" style="left:113.87px;top:61.27px;font-size:6.400px;line-height:6.400px;color:#3b3b3b;letter-spacing:-0.350px;">Setup...</div>
<div class="tx" style="left:137.87px;top:54.57px;font-size:6.400px;line-height:6.400px;color:#3b3b3b;letter-spacing:-0.350px;">Scale</div>
<div class="tx" style="left:160.58px;top:54.57px;font-size:6.400px;line-height:6.400px;color:#b5b5b5;letter-spacing:-0.120px;">First</div>
<div class="tx" style="left:159.27px;top:61.27px;font-size:6.400px;line-height:6.400px;color:#b5b5b5;letter-spacing:-0.120px;">Page</div>
<div class="tx" style="left:178.95px;top:54.57px;font-size:6.400px;line-height:6.400px;color:#b5b5b5;letter-spacing:-0.350px;">Previous</div>
<div class="tx" style="left:182.77px;top:61.27px;font-size:6.400px;line-height:6.400px;color:#b5b5b5;letter-spacing:-0.120px;">Page</div>
<div class="tx" style="left:206.66px;top:54.57px;font-size:6.400px;line-height:6.400px;color:#3b3b3b;letter-spacing:-0.120px;">Next</div>
<div class="tx" style="left:205.77px;top:61.27px;font-size:6.400px;line-height:6.400px;color:#3b3b3b;letter-spacing:-0.120px;">Page</div>
<div class="tx" style="left:226.19px;top:54.57px;font-size:6.400px;line-height:6.400px;color:#3b3b3b;letter-spacing:-0.120px;">Last</div>
<div class="tx" style="left:224.77px;top:61.27px;font-size:6.400px;line-height:6.400px;color:#3b3b3b;letter-spacing:-0.120px;">Page</div>
<div class="tx" style="left:244.50px;top:54.57px;font-size:6.400px;line-height:6.400px;color:#3b3b3b;letter-spacing:-0.174px;">Navigation</div>
<div class="tx" style="left:251.52px;top:61.27px;font-size:6.400px;line-height:6.400px;color:#3b3b3b;letter-spacing:-0.120px;">Pane</div>
<div class="tx" style="left:279.30px;top:54.57px;font-size:6.400px;line-height:6.400px;color:#3b3b3b;letter-spacing:-0.165px;">Zoom</div>
<div class="tx" style="left:282.17px;top:61.27px;font-size:6.400px;line-height:6.400px;color:#3b3b3b;letter-spacing:-0.120px;">Out</div>
<div class="tx" style="left:299.00px;top:54.57px;font-size:6.400px;line-height:6.400px;color:#3b3b3b;letter-spacing:-0.090px;">Zoom</div>
<div class="tx" style="left:318.70px;top:54.57px;font-size:6.400px;line-height:6.400px;color:#3b3b3b;letter-spacing:-0.265px;">Zoom</div>
<div class="tx" style="left:323.80px;top:61.27px;font-size:6.400px;line-height:6.400px;color:#3b3b3b;letter-spacing:-0.120px;">In</div>
<div class="tx" style="left:344.77px;top:54.57px;font-size:6.400px;line-height:6.400px;color:#3b3b3b;letter-spacing:-0.120px;">Page</div>
<div class="tx" style="left:341.30px;top:61.27px;font-size:6.400px;line-height:6.400px;color:#3b3b3b;letter-spacing:-0.336px;">Layout</div>
<div class="tx" style="left:372.50px;top:54.57px;font-size:6.400px;line-height:6.400px;color:#3b3b3b;letter-spacing:-0.293px;">Enable Continuous</div>
<div class="tx" style="left:385.32px;top:61.27px;font-size:6.400px;line-height:6.400px;color:#3b3b3b;letter-spacing:-0.120px;">Scrolling</div>
<div class="tx" style="left:425.30px;top:54.57px;font-size:6.400px;line-height:6.400px;color:#b5b5b5;letter-spacing:-0.336px;">Show Cover</div>
<div class="tx" style="left:433.82px;top:61.27px;font-size:6.400px;line-height:6.400px;color:#b5b5b5;letter-spacing:-0.120px;">Page</div>
<div class="tx" style="left:463.40px;top:54.57px;font-size:6.400px;line-height:6.400px;color:#3b3b3b;letter-spacing:-0.315px;">Export...</div>
<div class="tx" style="left:487.48px;top:54.57px;font-size:6.400px;line-height:6.400px;color:#3b3b3b;letter-spacing:-0.350px;">Send...</div>
<div class="tx" style="left:511.31px;top:54.57px;font-size:6.400px;line-height:6.400px;color:#3b3b3b;letter-spacing:-0.350px;">Parameters</div>
<div class="tx" style="left:544.60px;top:54.57px;font-size:6.400px;line-height:6.400px;color:#b5b5b5;letter-spacing:-0.224px;">Editing</div>
<div class="tx" style="left:545.42px;top:61.27px;font-size:6.400px;line-height:6.400px;color:#b5b5b5;letter-spacing:-0.120px;">Fields</div>
<div class="tx" style="left:566.20px;top:54.57px;font-size:6.400px;line-height:6.400px;color:#3b3b3b;letter-spacing:-0.250px;">Watermark</div>
<div class="tx" style="left:5.50px;top:71.17px;font-size:6.400px;line-height:6.400px;color:#444;letter-spacing:-0.213px;">Actions</div>
<div class="tx" style="left:46.08px;top:71.17px;font-size:6.400px;line-height:6.400px;color:#444;letter-spacing:-0.120px;">File</div>
<div class="tx" style="left:107.72px;top:71.17px;font-size:6.400px;line-height:6.400px;color:#444;letter-spacing:-0.120px;">Print</div>
<div class="tx" style="left:201.60px;top:71.17px;font-size:6.400px;line-height:6.400px;color:#444;letter-spacing:-0.124px;">Navigation</div>
<div class="tx" style="left:299.00px;top:71.17px;font-size:6.400px;line-height:6.400px;color:#444;letter-spacing:-0.090px;">Zoom</div>
<div class="tx" style="left:393.00px;top:71.17px;font-size:6.400px;line-height:6.400px;color:#444;letter-spacing:-0.314px;">View</div>
<div class="tx" style="left:475.40px;top:71.17px;font-size:6.400px;line-height:6.400px;color:#444;letter-spacing:-0.283px;">Export</div>
<div class="tx" style="left:539.80px;top:71.17px;font-size:6.400px;line-height:6.400px;color:#444;letter-spacing:-0.271px;">Document</div>
<div class="tx" style="left:4.90px;top:84.69px;font-size:8.936px;line-height:8.936px;color:#8a8a8a;letter-spacing:-0.452px;">Navigation</div>
<div class="tx" style="left:9.30px;top:104.81px;font-size:6.720px;line-height:6.720px;color:#8c8c8c;letter-spacing:-0.298px;">Enter text to search...</div>
<div class="tx" style="left:6.80px;top:117.97px;font-size:6.600px;line-height:6.600px;color:#333;letter-spacing:-0.338px;">Document Map</div>
<div class="tx" style="left:56.45px;top:117.97px;font-size:6.600px;line-height:6.600px;color:#1f64b8;letter-spacing:-0.350px;font-weight:700;">Pages</div>
<div class="tx" style="left:79.57px;top:117.97px;font-size:6.600px;line-height:6.600px;color:#333;letter-spacing:-0.350px;">Search Results</div>
<div class="tx" style="left:65.93px;top:210.71px;font-size:6.720px;line-height:6.720px;color:#333;letter-spacing:-0.401px;">1</div>
<div class="tx" style="left:65.93px;top:304.01px;font-size:6.720px;line-height:6.720px;color:#333;letter-spacing:-0.401px;">2</div>
<div class="tx" style="left:65.93px;top:397.01px;font-size:6.720px;line-height:6.720px;color:#333;letter-spacing:-0.401px;">3</div>
<div class="tx" style="left:3.30px;top:466.37px;font-size:6.600px;line-height:6.600px;color:#444;letter-spacing:-0.350px;">Page:</div>
<div class="tx" style="left:25.47px;top:466.37px;font-size:6.600px;line-height:6.600px;color:#222;letter-spacing:-0.120px;">1</div>
<div class="tx" style="left:36.30px;top:466.37px;font-size:6.600px;line-height:6.600px;color:#444;letter-spacing:0.021px;">/ 6</div>
<div class="tx" style="left:656.11px;top:466.67px;font-size:6.600px;line-height:6.600px;color:#444;letter-spacing:-0.350px;">100%</div>
</body></html>
